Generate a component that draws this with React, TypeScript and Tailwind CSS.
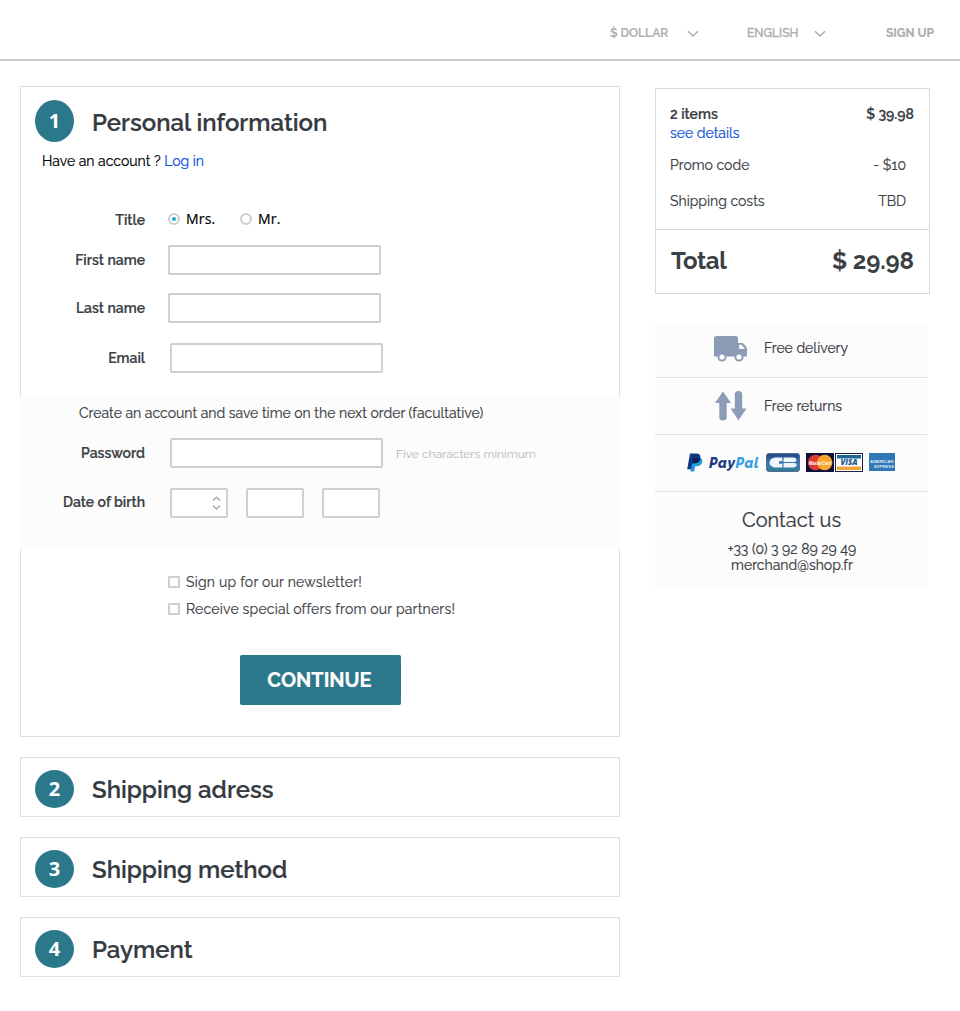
import React from "react";

function Chevron() {
  return (
    <svg width="12" height="8" viewBox="0 0 12 8" fill="none" stroke="#a9a9a9" strokeWidth="1.3">
      <path d="M1 1.2 L6 6 L11 1.2" />
    </svg>
  );
}

function Header() {
  return (
    <header className="flex h-[61px] items-start border-b-2 border-[#cccccc] pl-[610px] pt-[25px] text-[12px] leading-4 font-semibold text-[#aeaeae]">
      <span className="w-[77px] whitespace-nowrap">$ DOLLAR</span>
      <span className="mt-[5px] w-[60px]"><Chevron /></span>
      <span className="w-[67px] font-medium [-webkit-text-stroke:0.35px]">ENGLISH</span>
      <span className="mt-[5px] w-[72px]"><Chevron /></span>
      <span className="whitespace-nowrap font-bold">SIGN UP</span>
    </header>
  );
}

function StepTitle({ n, title, tall }: { n: number; title: string; tall?: boolean }) {
  return (
    <div className="flex items-start pl-[14px]">
      <span
        className={`flex w-[39px] items-center justify-center rounded-[50%] bg-[#2c788b] font-['Open_Sans',sans-serif] text-[20px] font-bold text-white [-webkit-text-stroke:0px] ${tall ? "h-[42px]" : "h-[38px]"}`}
      >
        {n}
      </span>
      <h2 className={`ml-[18px] text-[24px] leading-8 font-semibold text-[#363a41] ${tall ? "mt-[7px]" : "mt-[4px]"}`}>{title}</h2>
    </div>
  );
}

const label = "w-[145px] shrink-0 text-right text-[14px] leading-5 font-semibold text-[#3b3f45]";
const box = "h-[30px] rounded-[2px] border-2 border-[#cfcfcf] bg-white";

function PersonalCard() {
  return (
    <section className="h-[651px] w-[600px]">
      <div className="h-[310px] border border-b-0 border-[#dcdce8] pt-[13px]">
        <StepTitle n={1} title="Personal information" tall />
        <p className="mt-[9px] pl-[21px] text-[14px] leading-5 text-black">
          Have an account ? <a className="text-[#0f52dc]">Log in</a>
        </p>
        <div className="mt-[38px] -ml-[21px] flex h-5 items-center">
          <span className={`${label} relative top-px`}>Title</span>
          <span className="ml-[23px] flex size-3 items-center justify-center rounded-full border-2 border-[#cfcfcf] bg-white">
            <span className="size-1 rounded-full bg-[#1fa9d0]" />
          </span>
          <span className="ml-[6px] w-[54px] font-['Open_Sans',sans-serif] text-[14px] leading-5 tracking-[0.2px] text-black">Mrs.</span>
          <span className="size-3 rounded-full border-2 border-[#cfcfcf] bg-white" />
          <span className="ml-[6px] font-['Open_Sans',sans-serif] text-[14px] leading-5 tracking-[0.2px] text-black">Mr.</span>
        </div>
        <div className="mt-[16px] -ml-[21px] flex items-center">
          <span className={label}>First name</span>
          <span className={`ml-[23px] w-[213px] ${box}`} />
        </div>
        <div className="mt-[18px] -ml-[21px] flex items-center">
          <span className={label}>Last name</span>
          <span className={`ml-[23px] w-[213px] ${box}`} />
        </div>
        <div className="mt-[20px] -ml-[21px] flex items-center">
          <span className={label}>Email</span>
          <span className={`ml-[25px] w-[213px] ${box}`} />
        </div>
      </div>

      <div className="h-[153px] bg-[#fcfcfc] pt-[7px]">
        <p className="pl-[59px] text-[14px] leading-5 text-[#3b3f45]">
          Create an account and save time on the next order (facultative)
        </p>
        <div className="mt-[15px] -ml-[20px] flex items-center">
          <span className={label}>Password</span>
          <span className={`ml-[25px] w-[213px] ${box}`} />
          <span className="ml-[13px] pt-px text-[12px] leading-5 text-[#b5b5b5] [-webkit-text-stroke:0px]">Five characters minimum</span>
        </div>
        <div className="mt-[20px] -ml-[20px] flex items-center">
          <span className={`${label} relative -top-px`}>Date of birth</span>
          <span className={`ml-[25px] flex w-[58px] items-center justify-end pr-[5px] ${box}`}>
            <svg width="9" height="14" viewBox="0 0 9 14" fill="none" stroke="#9a9a9a" strokeWidth="1.2">
              <path d="M1 4.5 L4.5 1.2 L8 4.5 M1 9.7 L4.5 13 L8 9.7" />
            </svg>
          </span>
          <span className={`ml-[18px] w-[58px] ${box}`} />
          <span className={`ml-[18px] w-[58px] ${box}`} />
        </div>
      </div>

      <div className="h-[188px] border border-t-0 border-[#dcdce8] pt-[23px] pl-[147px]">
        <div className="flex h-5 items-center">
          <span className="size-3 rounded-[1px] border-2 border-[#cfcfcf]" />
          <span className="ml-[6px] text-[14px] leading-5 tracking-[0.22px] text-[#3f4348]">Sign up for our newsletter!</span>
        </div>
        <div className="mt-[7px] flex h-5 items-center">
          <span className="size-3 rounded-[1px] border-2 border-[#cfcfcf]" />
          <span className="ml-[6px] text-[14px] leading-5 tracking-[0.2px] text-[#3f4348]">Receive special offers from our partners!</span>
        </div>
        <button className="mt-[36px] ml-[72px] block h-[50px] w-[161px] rounded-[2px] bg-[#2c788b] pr-[2px] text-[20px] leading-[50px] font-bold text-white">
          CONTINUE
        </button>
      </div>
    </section>
  );
}

function StepCard({ n, title }: { n: number; title: string }) {
  return (
    <section className="h-[60px] w-[600px] border border-[#dadfe8] pt-[12px]">
      <StepTitle n={n} title={title} />
    </section>
  );
}

function Summary() {
  return (
    <section className="h-[206px] w-[275px] border border-[#dadae6] text-[14px] leading-5 text-[#3b4045]">
      <div className="h-[141px] border-b border-[#dadae6] pt-[15px] pl-[14px]">
        <div className="flex justify-between pr-[15px] font-semibold">
          <span>2 items</span>
          <span>$ 39.98</span>
        </div>
        <a className="-mt-px block text-[#0f52dc]">see details</a>
        <div className="mt-[12px] flex justify-between pr-[23px]">
          <span>Promo code</span>
          <span>- $10</span>
        </div>
        <div className="mt-[16px] flex justify-between pr-[23px]">
          <span>Shipping costs</span>
          <span>TBD</span>
        </div>
      </div>
      <div className="flex justify-between pt-[15px] pr-[15px] pl-[15px] text-[24px] leading-8 font-bold [-webkit-text-stroke:0px]">
        <span className="tracking-[-0.4px]">Total</span>
        <span className="tracking-[-0.1px]">$ 29.98</span>
      </div>
    </section>
  );
}

function PayPalMark() {
  return (
    <svg width="16" height="19" viewBox="0 0 16 19">
      <path d="M5 4.5 H12 C15 5 15.8 7.2 15 9.8 C14.2 12.3 12.2 13.3 9.3 13.3 H8.2 L7.2 18.5 H3.4 Z" fill="#1f9bdb" />
      <path d="M3 .5 H9 C12.4 .5 14 2.3 13.3 5.5 C12.6 9 10.3 10.3 7.2 10.3 H5.2 L4.1 16.2 H.2 Z" fill="#12387f" />
      <path d="M5.2 10.3 L5.9 6 Q6.1 5 7 5 H13.3 C12.8 9 10.3 10.3 7.2 10.3 Z" fill="#0b2359" />
    </svg>
  );
}

function CbCard() {
  return (
    <svg width="34" height="19" viewBox="0 0 34 19">
      <defs>
        <linearGradient id="cb" x1="0" y1="0" x2="0" y2="1">
          <stop offset="0" stopColor="#24457f" />
          <stop offset=".6" stopColor="#3a80bd" />
          <stop offset="1" stopColor="#35788a" />
        </linearGradient>
      </defs>
      <rect x=".5" y=".5" width="33" height="18" rx="2.5" fill="url(#cb)" stroke="#4d6f9c" />
      <path d="M10 4.5 H16.3 V8.3 H13 V10.7 H16.3 V14.5 H10 C1.5 14.5 1.5 4.5 10 4.5 Z" fill="#eef6fb" />
      <path d="M17.5 4.5 H27 C31.5 4.5 31.5 9 28.5 9 H17.5 Z M17.5 10 H28.5 C31.5 10.2 31.5 14.5 27 14.5 H17.5 Z" fill="#eef6fb" />
    </svg>
  );
}

function MasterCard() {
  return (
    <svg width="28" height="19" viewBox="0 0 28 19">
      <rect width="28" height="19" fill="#10103f" />
      <circle cx="9.5" cy="9.5" r="7.7" fill="#dd3b32" />
      <circle cx="18.7" cy="9.5" r="7.7" fill="#f6a72c" />
      <text x="3" y="11.5" fill="#fff" fontFamily="Liberation Sans" fontStyle="italic" fontWeight="700" fontSize="4.8" textLength="22" lengthAdjust="spacingAndGlyphs">MasterCard</text>
    </svg>
  );
}

function VisaCard() {
  return (
    <svg width="28" height="19" viewBox="0 0 28 19">
      <rect width="28" height="19" fill="#202040" />
      <rect x="1" y="1" width="26" height="17" fill="#fff" />
      <rect x="2" y="2" width="24" height="3.5" fill="#1e6696" />
      <rect x="2" y="13.5" width="24" height="3.5" fill="#f1a33a" />
      <text x="14" y="12.4" textAnchor="middle" fill="#185a91" fontFamily="Open Sans" fontStyle="italic" fontWeight="800" fontSize="8.3" textLength="17" lengthAdjust="spacingAndGlyphs">VISA</text>
    </svg>
  );
}

function AmexCard() {
  return (
    <svg width="26" height="18" viewBox="0 0 26 18">
      <rect width="26" height="18" fill="#2f77b5" />
      <g fill="#dbe9f5" fontFamily="Liberation Sans" fontWeight="700" fontSize="4.4">
        <text x="1" y="10.3" textLength="23.5" lengthAdjust="spacingAndGlyphs">AMERICAN</text>
        <text x="5" y="14.6" textLength="20" lengthAdjust="spacingAndGlyphs">EXPRESS</text>
      </g>
    </svg>
  );
}

function Reassurance() {
  return (
    <section className="mt-[28px] h-[267px] w-[273px] bg-[#fcfcfc] text-[14px] leading-5 text-[#363a41]">
      <div className="mr-px ml-px flex h-[56px] items-start border-b border-[#dadfe8] pl-[58px]">
        <svg className="mt-[14px]" width="33" height="26" viewBox="0 0 33 26">
          <path d="M2.5 0 H21.5 Q24 0 24 2.2 V7 H27.5 Q29 7 30 8 L32 10.5 Q33 11.8 33 13.5 V20.5 H0 V2.5 Q0 0 2.5 0 Z" fill="#8d9cb6" />
          <path d="M25 8.7 H27.6 L31 12.9 H25 Z" fill="#fcfcfc" />
          <circle cx="8" cy="21" r="4.6" fill="#8d9cb6" />
          <circle cx="8" cy="21" r="2.6" fill="#fcfcfc" />
          <circle cx="25" cy="21" r="4.6" fill="#8d9cb6" />
          <circle cx="25" cy="21" r="2.6" fill="#fcfcfc" />
        </svg>
        <span className="mt-[16px] ml-[17px]">Free delivery</span>
      </div>
      <div className="mr-px flex h-[57px] items-start border-b border-[#dadfe8] pl-[60px]">
        <svg className="mt-[12px]" width="32" height="31" viewBox="0 0 32 31">
          <path d="M8 1.5 L16 13 H11.7 V27.2 Q11.7 30.5 8 30.5 Q4.3 30.5 4.3 27.2 V13 H0 Z" fill="#8d9cb6" />
          <path d="M23.5 30.2 L31.5 18.5 H27.2 V4.4 Q27.2 1 23.5 1 Q19.8 1 19.8 4.4 V18.5 H15.5 Z" fill="#8d9cb6" />
        </svg>
        <span className="mt-[18px] ml-[17px]">Free returns</span>
      </div>
      <div className="mr-px flex h-[57px] items-start border-b border-[#dadfe8] pt-[18px] pl-[32px]">
        <PayPalMark />
        <span className="ml-[6px] w-[57px] text-[14px] leading-5 font-extrabold tracking-[0.65px] whitespace-nowrap text-[#1b3a80] italic [-webkit-text-stroke:0px]">
          Pay<span className="text-[#3a9fdc]">Pal</span>
        </span>
        <CbCard />
        <span className="ml-[6px]"><MasterCard /></span>
        <span className="ml-px"><VisaCard /></span>
        <span className="ml-[6px]"><AmexCard /></span>
      </div>
      <div className="pt-[14px] text-center">
        <h3 className="text-[20px] leading-7 font-normal">Contact us</h3>
        <p className="mt-[7px] pl-px leading-4">+33 (0) 3 92 89 29 49</p>
        <p className="pl-px leading-4">merchand@shop.fr</p>
      </div>
    </section>
  );
}

export default function App() {
  return (
    <div className="h-[1011px] w-[960px] overflow-hidden bg-white font-['Raleway','Lato',sans-serif] [-webkit-text-stroke:0.2px]">
      <Header />
      <main className="flex items-start pt-[25px] pl-[20px]">
        <div className="flex flex-col gap-[20px]">
          <PersonalCard />
          <StepCard n={2} title="Shipping adress" />
          <StepCard n={3} title="Shipping method" />
          <StepCard n={4} title="Payment" />
        </div>
        <aside className="mt-[2px] ml-[35px]">
          <Summary />
          <Reassurance />
        </aside>
      </main>
    </div>
  );
}
